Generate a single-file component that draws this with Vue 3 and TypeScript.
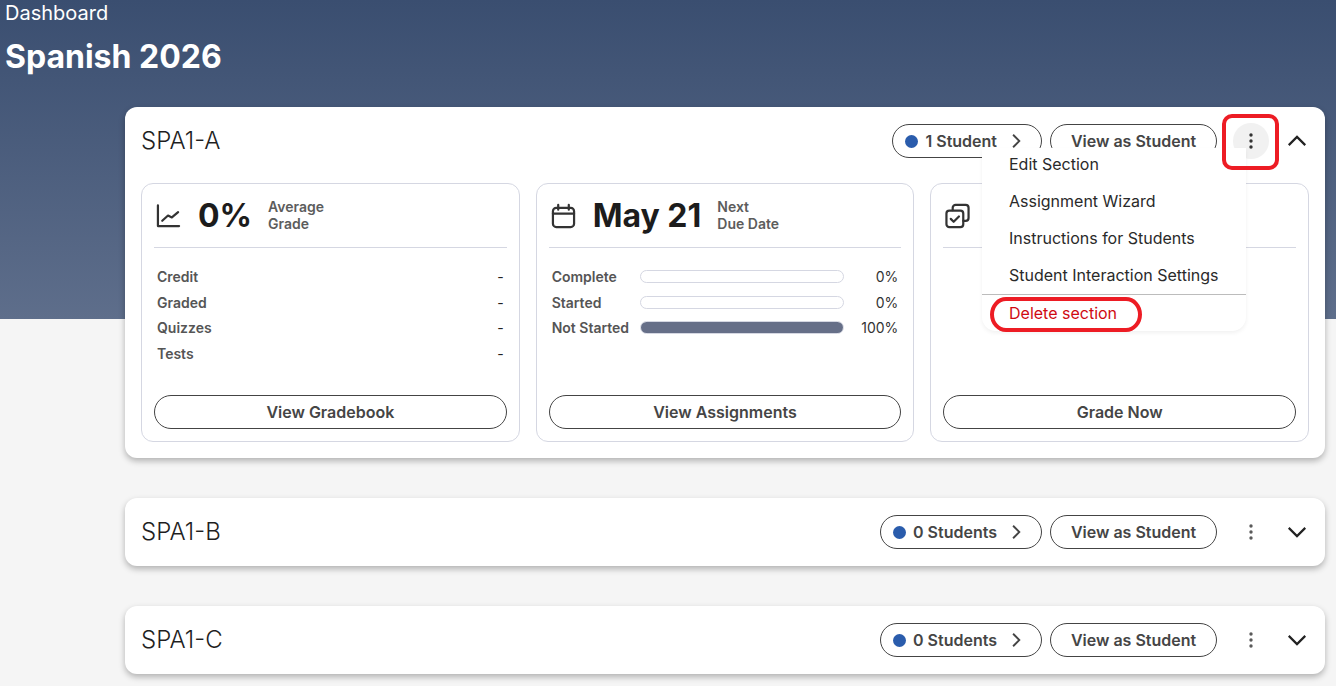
<script setup lang="ts">
interface StatRow { label: string; value: string }
interface BarRow { label: string; pct: number }
const gradeRows: StatRow[] = [
  { label: 'Credit', value: '-' },
  { label: 'Graded', value: '-' },
  { label: 'Quizzes', value: '-' },
  { label: 'Tests', value: '-' },
]
const barRows: BarRow[] = [
  { label: 'Complete', pct: 0 },
  { label: 'Started', pct: 0 },
  { label: 'Not Started', pct: 100 },
]
const menuItems = ['Edit Section', 'Assignment Wizard', 'Instructions for Students', 'Student Interaction Settings']
const collapsed = ['SPA1-B', 'SPA1-C']
</script>

<template>
  <div class="page">
    <header class="hero">
      <div class="crumb">Dashboard</div>
      <h1 class="title">Spanish 2026</h1>
    </header>

    <main class="sections">
      <section class="section">
        <div class="section-head">
          <h2 class="section-name">SPA1-A</h2>
          <div class="actions">
            <button class="pill"><span class="dot"></span><span>1 Student</span>
              <svg class="chev-r" viewBox="0 0 24 24"><path d="M8.500 4.500l7.500 7.500-7.500 7.500" /></svg>
            </button>
            <button class="pill view">View as Student</button>
            <button class="kebab active">
              <svg viewBox="0 0 24 24"><circle cx="12" cy="6" r="1.700" /><circle cx="12" cy="12" r="1.700" /><circle cx="12" cy="18" r="1.700" /></svg>
            </button>
            <svg class="chev" viewBox="0 0 24 24"><path d="M3 16.500l9-9 9 9" /></svg>
          </div>
        </div>

        <div class="cards">
          <article class="card">
            <div class="card-top">
              <svg class="card-icon" viewBox="0 0 26 26"><path d="M2 2v21.500h22" /><path d="M6.500 18l6-5.500 4 2 6.500-5.500" /></svg>
              <span class="big">0%</span>
              <span class="sub">Average<br />Grade</span>
            </div>
            <div class="rows">
              <div v-for="r in gradeRows" :key="r.label" class="row">
                <span class="row-label">{{ r.label }}</span><span class="row-val">{{ r.value }}</span>
              </div>
            </div>
            <button class="pill wide">View Gradebook</button>
          </article>

          <article class="card">
            <div class="card-top">
              <svg class="card-icon" viewBox="0 0 26 26"><rect x="2" y="4.500" width="22" height="20" rx="3.500" /><path d="M2 10.500h22M7.500 1.500v5M18.500 1.500v5" /></svg>
              <span class="big">May 21</span>
              <span class="sub">Next<br />Due Date</span>
            </div>
            <div class="rows">
              <div v-for="r in barRows" :key="r.label" class="row">
                <span class="row-label bar-label">{{ r.label }}</span>
                <span class="track"><span class="fill" :style="{ width: r.pct + '%' }"></span></span>
                <span class="bar-val">{{ r.pct }}%</span>
              </div>
            </div>
            <button class="pill wide">View Assignments</button>
          </article>

          <article class="card">
            <div class="card-top">
              <svg class="card-icon" viewBox="0 0 26 26"><path d="M8 7V4.500A3 3 0 0 1 11 1.500h10.500a3 3 0 0 1 3 3V15a3 3 0 0 1-3 3H19" /><rect x="1.500" y="7.500" width="17.500" height="17" rx="3" /><path d="M6 16l3 3 5.500-5.500" /></svg>
            </div>
            <button class="pill wide">Grade Now</button>
          </article>
        </div>

        <div class="menu">
          <div v-for="m in menuItems" :key="m" class="menu-item">{{ m }}</div>
          <div class="menu-item danger">Delete section</div>
        </div>
        <span class="mark mark-kebab"></span>
        <span class="mark mark-delete"></span>
      </section>

      <section v-for="name in collapsed" :key="name" class="section">
        <div class="section-head">
          <h2 class="section-name">{{ name }}</h2>
          <div class="actions">
            <button class="pill"><span class="dot"></span><span>0 Students</span>
              <svg class="chev-r" viewBox="0 0 24 24"><path d="M8.500 4.500l7.500 7.500-7.500 7.500" /></svg>
            </button>
            <button class="pill view">View as Student</button>
            <button class="kebab">
              <svg viewBox="0 0 24 24"><circle cx="12" cy="6" r="1.700" /><circle cx="12" cy="12" r="1.700" /><circle cx="12" cy="18" r="1.700" /></svg>
            </button>
            <svg class="chev" viewBox="0 0 24 24"><path d="M3 7.500l9 9 9-9" /></svg>
          </div>
        </div>
      </section>
    </main>
  </div>
</template>

<style>
html, body { margin: 0; background: #f5f5f5; }
</style>

<style scoped>
* { box-sizing: border-box; }
.page {
  position: relative;
  height: 686px;
  overflow: hidden;
  background: #f5f5f5;
  font-family: Inter, "Liberation Sans", sans-serif;
  color: #1c1c1c;
}
.hero {
  height: 319px;
  margin-bottom: -212px;
  padding: 0 5px;
  background: linear-gradient(180deg, #3a4e70 0%, #5e6e8b 100%);
  color: #fff;
}
.crumb { font-size: 20px; line-height: 26px; }
.title { margin: 11px 0 0; font-size: 32px; line-height: 40px; font-weight: 700; }
.sections {
  position: relative;
  display: flex;
  flex-direction: column;
  gap: 40px;
  margin-left: 125px;
  width: 1200px;
}
.section {
  position: relative;
  background: #fff;
  border-radius: 12px;
  box-shadow: 0 3px 6px rgba(0, 0, 0, 0.28);
}
.section-head {
  display: flex;
  align-items: center;
  justify-content: space-between;
  height: 68px;
  padding: 0 16px;
}
.section-name { margin: 0 0 2px; font-size: 24px; font-weight: 300; color: #1f1f1f; }
.actions { display: flex; align-items: center; gap: 8px; }
.pill {
  display: inline-flex;
  align-items: center;
  justify-content: center;
  height: 34px;
  padding: 0 12px;
  border: 1px solid #444;
  border-radius: 17px;
  background: #fff;
  font: 600 16px Inter, "Liberation Sans", sans-serif;
  color: #454545;
}
.dot { width: 13px; height: 13px; margin-right: 7px; border-radius: 50%; background: #2a5cac; }
.chev-r { width: 20px; height: 20px; margin-left: 9px; margin-right: 3px; fill: none; stroke: #444; stroke-width: 2.2; }
.view { width: 167px; padding: 0; }
.kebab {
  display: flex;
  align-items: center;
  justify-content: center;
  width: 36px;
  height: 36px;
  margin-left: 8px;
  padding: 0;
  border: 0;
  border-radius: 50%;
  background: transparent;
}
.kebab.active { background: #f1f1f1; }
.kebab svg { width: 24px; height: 24px; fill: #5a5a5a; }
.kebab.active svg { fill: #333; }
.chev { width: 22px; height: 22px; margin: 0 1px 0 9px; fill: none; stroke: #222; stroke-width: 2.4; }
.cards {
  display: grid;
  grid-template-columns: repeat(3, 1fr);
  gap: 16px;
  margin-top: 8px;
  padding: 0 16px 16px;
}
.card {
  display: flex;
  flex-direction: column;
  height: 259px;
  padding: 0 12px 12px;
  border: 1px solid #d5d7e2;
  border-radius: 12px;
}
.card-top {
  display: flex;
  align-items: center;
  flex: none;
  height: 64px;
  padding-left: 2px;
  border-bottom: 1px solid #d5d7e2;
}
.card-icon { width: 25px; height: 26px; flex: none; fill: none; stroke: #333; stroke-width: 2.3; stroke-linecap: round; stroke-linejoin: round; }
.big { margin-left: 17px; font-size: 32px; font-weight: 700; color: #1c1c1c; }
.sub { margin: 0 0 2px 16px; font-size: 14px; line-height: 17px; font-weight: 600; color: #5c5c5c; }
.rows { display: flex; flex-direction: column; gap: 4px; padding: 18px 3px 0; }
.row { display: flex; align-items: center; justify-content: space-between; height: 21.6px; font-size: 14px; }
.row-label { font-weight: 600; color: #555; }
.row-val { color: #222; }
.bar-label { width: 88px; flex: none; }
.track {
  flex: 1;
  height: 13px;
  overflow: hidden;
  border: 1px solid #d5d7e2;
  border-radius: 7px;
  background: #fff;
}
.fill { display: block; height: 100%; background: #666f88; }
.bar-val { width: 54px; flex: none; text-align: right; color: #333; }
.wide { width: 100%; margin-top: auto; }
.menu {
  position: absolute;
  top: 41px;
  left: 857px;
  width: 264px;
  background: #fff;
  border-radius: 0 0 14px 14px;
  box-shadow: 0 2px 4px rgba(0, 0, 0, 0.06);
}
.menu-item {
  display: flex;
  align-items: center;
  height: 37px;
  padding-left: 27px;
  font-size: 16px;
  color: #2a2a2a;
}
.menu-item:first-child { height: 34px; padding-bottom: 3px; }
.danger { height: 37px; margin-top: 1px; border-top: 1px solid #bcbcbc; color: #cf0a12; }
.mark { position: absolute; border: 4px solid #ed1c24; }
.mark-kebab { top: 7px; left: 1097px; width: 57px; height: 56px; border-radius: 10px; }
.mark-delete { top: 190px; left: 865px; width: 152px; height: 35px; border-radius: 16px / 50%; }
</style>
